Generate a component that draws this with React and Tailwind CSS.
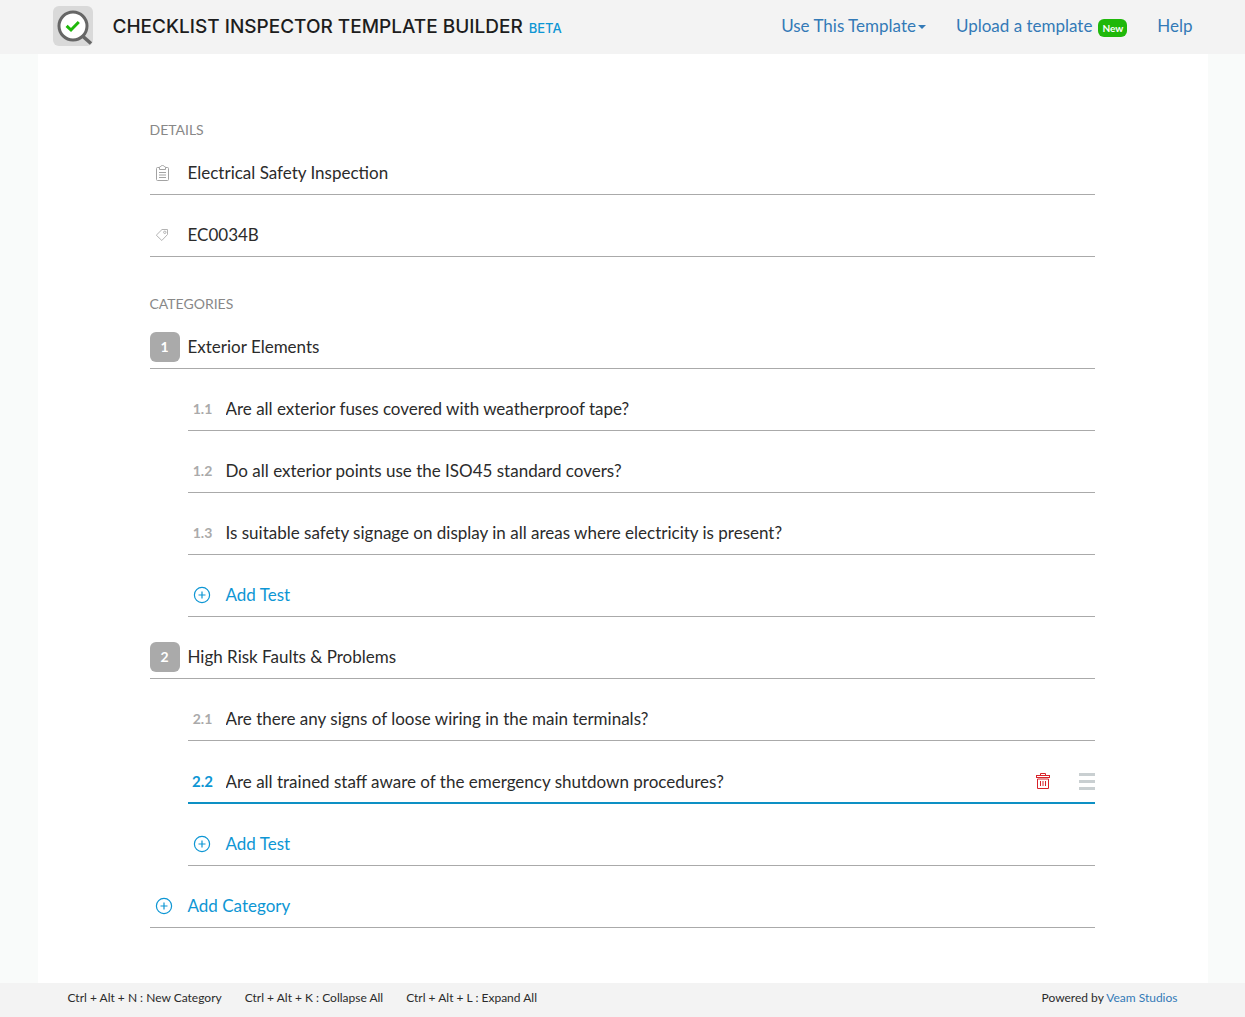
import React from "react";

const categories = [
  {
    title: "Exterior Elements",
    tests: [
      "Are all exterior fuses covered with weatherproof tape?",
      "Do all exterior points use the ISO45 standard covers?",
      "Is suitable safety signage on display in all areas where electricity is present?",
    ],
  },
  {
    title: "High Risk Faults & Problems",
    tests: [
      "Are there any signs of loose wiring in the main terminals?",
      "Are all trained staff aware of the emergency shutdown procedures?",
    ],
  },
];

const shortcuts = [
  "Ctrl + Alt + N : New Category",
  "Ctrl + Alt + K : Collapse All",
  "Ctrl + Alt + L : Expand All",
];

function Logo() {
  return (
    <svg viewBox="0 0 40 40" className="size-10 shrink-0" aria-hidden="true">
      <rect width="40" height="40" rx="6" fill="#d9d9d9" />
      <path d="M30 30.5 L38 37.5" stroke="#666" strokeWidth="3.6" />
      <circle cx="20" cy="20" r="14" fill="#fff" stroke="#666" strokeWidth="3" />
      <path d="M13.6 19.8 L18 24 L25.8 16" fill="none" stroke="#1fb80a" strokeWidth="3" />
    </svg>
  );
}

function ClipboardIcon() {
  return (
    <svg viewBox="0 0 30 30" className="size-[30px]" fill="none" stroke="#a3a3a3" aria-hidden="true">
      <path d="M9.5 9.5 H7.5 Q6.5 9.5 6.5 10.5 V21.5 Q6.5 22.5 7.5 22.5 H17.5 Q18.5 22.5 18.5 21.5 V10.5 Q18.5 9.5 17.5 9.5 H15.5" />
      <path d="M9.5 11.5 V9.5 Q9.5 8.5 10.7 8.5 Q11 7.5 12.5 7.5 Q14 7.5 14.3 8.5 Q15.5 8.5 15.5 9.5 V11.5 Z" />
      <path d="M9 14.5 H16 M9 17 H16 M9 19.5 H16" />
    </svg>
  );
}

function TagIcon() {
  return (
    <svg viewBox="0 0 30 30" className="size-[30px]" fill="none" stroke="#b3b3b3" aria-hidden="true">
      <path d="M6.3 15.2 L12 9.5 H17.5 V14.5 L11.8 20.5 Z" strokeLinejoin="round" />
      <circle cx="14.8" cy="12.3" r="1.2" />
    </svg>
  );
}

function PlusIcon() {
  return (
    <svg viewBox="0 0 30 30" className="size-[30px]" fill="none" stroke="#0d96d4" aria-hidden="true">
      <circle cx="14" cy="15" r="7.6" strokeWidth="1.2" />
      <path d="M14 11.5 V18.5 M10.5 15 H17.5" strokeWidth="1.2" />
    </svg>
  );
}

function TrashIcon() {
  return (
    <svg viewBox="0 0 14 16" className="h-4 w-3.5" fill="none" stroke="#d8232a" aria-hidden="true">
      <path d="M4.5 2.5 V0.5 H9.5 V2.5" />
      <rect x="0.5" y="2.5" width="13" height="2" />
      <path d="M1.5 6 V15.5 H12.5 V6 Z" />
      <path d="M4.5 8 V13 M7 8 V13 M9.5 8 V13" />
    </svg>
  );
}

function Row({ icon, label, value, active, children }) {
  return (
    <div
      className={
        "flex items-center gap-2 pb-1.5 " +
        (active ? "border-b-2 border-[#0d90c4]" : "border-b border-[#aaa]")
      }
    >
      <span className="flex h-[30px] w-[30px] shrink-0 items-center justify-center">{icon}</span>
      <input
        aria-label={label}
        defaultValue={value}
        className={
          "h-[30px] min-w-0 flex-1 bg-transparent text-[17px] text-[#2b2b2b] outline-none " +
          (active ? "" : "pb-0.5")
        }
      />
      {children}
    </div>
  );
}

function AddButton({ children }) {
  return (
    <button
      type="button"
      className="flex w-full items-center gap-2 border-b border-[#aaa] pb-1.5 text-left text-[17px] leading-[30px] text-[#0d96d4]"
    >
      <PlusIcon />
      {children}
    </button>
  );
}

function Category({ number, title, tests }) {
  return (
    <>
      <Row
        label={"Category " + number}
        value={title}
        icon={
          <span className="flex size-[30px] items-center justify-center rounded-md bg-[#aaa] text-sm font-bold text-white">
            {number}
          </span>
        }
      />
      <div className="ml-[38px] flex flex-col gap-[25px]">
        {tests.map((test, i) => {
          const id = number + "." + (i + 1);
          const active = id === "2.2";
          return (
            <Row
              key={id}
              label={"Test " + id}
              value={test}
              active={active}
              icon={
                <span
                  className={
                    active ? "text-[15px] font-bold text-[#0d96d4]" : "text-sm font-bold text-[#aaa]"
                  }
                >
                  {id}
                </span>
              }
            >
              {active && (
                <div className="flex items-center gap-[29px]">
                  <button type="button" aria-label="Delete test">
                    <TrashIcon />
                  </button>
                  <button type="button" aria-label="Reorder test" className="flex flex-col gap-1">
                    <span className="h-[3px] w-4 bg-[#c9cfd1]" />
                    <span className="h-[3px] w-4 bg-[#c9cfd1]" />
                    <span className="h-[3px] w-4 bg-[#c9cfd1]" />
                  </button>
                </div>
              )}
            </Row>
          );
        })}
        <AddButton>Add Test</AddButton>
      </div>
    </>
  );
}

export default function App() {
  return (
    <div className="flex min-h-screen flex-col bg-[#f9fbfa] font-['Lato',sans-serif] text-[#2b2b2b]">
      <header className="bg-[#f3f3f3]">
        <div className="mx-auto flex h-[54px] w-full max-w-[1170px] items-center justify-between px-[15px] pb-0.5">
          <div className="flex items-center gap-5">
            <Logo />
            <h1 className="mt-0.5 flex items-baseline gap-1.5 font-['Inter',sans-serif] text-[19px] font-medium whitespace-nowrap text-[#1d1d1d]">
              CHECKLIST INSPECTOR TEMPLATE BUILDER
              <small className="text-[13px] font-medium text-[#0d96d4]">BETA</small>
            </h1>
          </div>
          <nav className="flex items-center gap-[30px] text-[17px] whitespace-nowrap text-[#337ab7]">
            <button type="button" className="flex items-center gap-0.5">
              Use This Template
              <svg viewBox="0 0 8 4" className="mt-0.5 h-1 w-2" aria-hidden="true">
                <path d="M0 0 H8 L4 4 Z" fill="currentColor" />
              </svg>
            </button>
            <a href="#upload" className="flex items-center gap-1.5">
              Upload a template
              <span className="mt-1 rounded-md bg-[#1fb80a] px-1 text-[10px] leading-[18px] font-bold text-white">New</span>
            </a>
            <a href="#help">Help</a>
          </nav>
        </div>
      </header>

      <main className="mx-auto w-full max-w-[1170px] flex-1 bg-white pt-[66px] pr-[113px] pb-[55px] pl-28">
        <section>
          <h2 className="mb-[18px] text-sm leading-5 text-[#888]">DETAILS</h2>
          <div className="flex flex-col gap-[25px]">
            <Row label="Template name" value="Electrical Safety Inspection" icon={<ClipboardIcon />} />
            <Row label="Template code" value="EC0034B" icon={<TagIcon />} />
          </div>
        </section>
        <section className="mt-[37px]">
          <h2 className="mb-[18px] text-sm leading-5 text-[#888]">CATEGORIES</h2>
          <div className="flex flex-col gap-[25px]">
            {categories.map((category, i) => (
              <Category key={category.title} number={i + 1} {...category} />
            ))}
            <AddButton>Add Category</AddButton>
          </div>
        </section>
      </main>

      <footer className="bg-[#f3f3f3] text-xs">
        <div className="mx-auto flex h-[34px] w-full max-w-[1170px] items-center justify-between px-[30px] pb-1">
          <ul className="flex gap-[23px]">
            {shortcuts.map((shortcut) => (
              <li key={shortcut}>{shortcut}</li>
            ))}
          </ul>
          <p>
            Powered by{" "}
            <a href="#veam-studios" className="text-[#337ab7]">
              Veam Studios
            </a>
          </p>
        </div>
      </footer>
    </div>
  );
}
